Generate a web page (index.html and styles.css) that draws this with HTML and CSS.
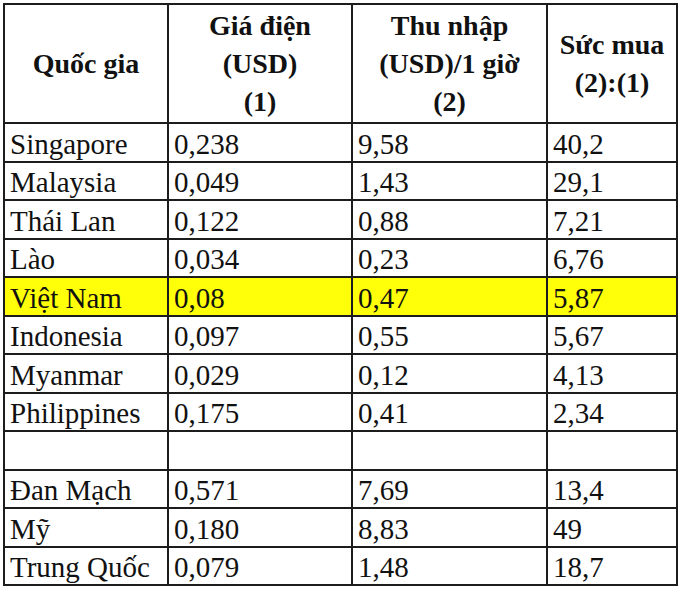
FILE: index.html
```html
<!DOCTYPE html>
<html>
<head>
<meta charset="utf-8">
<link rel="stylesheet" href="styles.css">
</head>
<body>
<div class="grid">
  <div class="h">Quốc gia</div>
  <div class="h">Giá điện<br>(USD)<br>(1)</div>
  <div class="h">Thu nhập<br>(USD)/1 giờ<br>(2)</div>
  <div class="h">Sức mua<br>(2):(1)</div>

  <div class="c">Singapore</div><div class="c">0,238</div><div class="c">9,58</div><div class="c">40,2</div>
  <div class="c">Malaysia</div><div class="c">0,049</div><div class="c">1,43</div><div class="c">29,1</div>
  <div class="c">Thái Lan</div><div class="c">0,122</div><div class="c">0,88</div><div class="c">7,21</div>
  <div class="c">Lào</div><div class="c">0,034</div><div class="c">0,23</div><div class="c">6,76</div>
  <div class="c hl">Việt Nam</div><div class="c hl">0,08</div><div class="c hl">0,47</div><div class="c hl">5,87</div>
  <div class="c">Indonesia</div><div class="c">0,097</div><div class="c">0,55</div><div class="c">5,67</div>
  <div class="c">Myanmar</div><div class="c">0,029</div><div class="c">0,12</div><div class="c">4,13</div>
  <div class="c">Philippines</div><div class="c">0,175</div><div class="c">0,41</div><div class="c">2,34</div>
  <div class="c"></div><div class="c"></div><div class="c"></div><div class="c"></div>
  <div class="c">Đan Mạch</div><div class="c">0,571</div><div class="c">7,69</div><div class="c">13,4</div>
  <div class="c">Mỹ</div><div class="c">0,180</div><div class="c">8,83</div><div class="c">49</div>
  <div class="c">Trung Quốc</div><div class="c">0,079</div><div class="c">1,48</div><div class="c">18,7</div>
</div>
</body>
</html>
```

FILE: styles.css
```css
html, body {
  margin: 0;
  padding: 0;
  background: #ffffff;
}

.grid {
  margin: 3px 0 0 3px;
  width: 675px;
  box-sizing: border-box;
  display: grid;
  grid-template-columns: 164px 184px 195px 130px;
  grid-template-rows: 119px repeat(12, 38.5px);
  border-left: 2px solid #1c1c1c;
  border-top: 2px solid #1c1c1c;
  font-family: "Liberation Serif", serif;
  color: #111111;
}

.h,
.c {
  box-sizing: border-box;
  border-right: 2px solid #1c1c1c;
  border-bottom: 2px solid #1c1c1c;
  display: flex;
  align-items: center;
  white-space: nowrap;
  overflow: hidden;
}

.h {
  justify-content: center;
  text-align: center;
  font-weight: bold;
  font-size: 28px;
  line-height: 38px;
}

.c {
  padding: 3px 0 0 5px;
  font-size: 29px;
  line-height: 32px;
}

.hl {
  background: #ffff0a;
}
```
